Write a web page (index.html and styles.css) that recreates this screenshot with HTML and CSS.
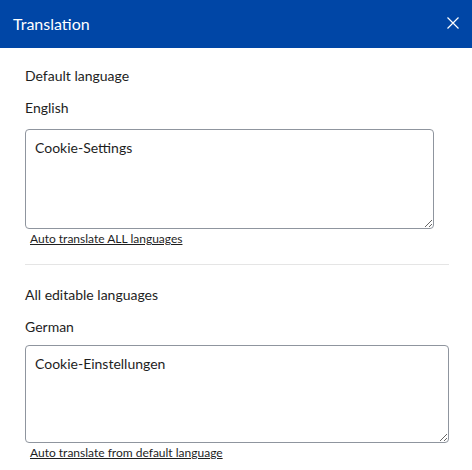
FILE: index.html
```html
<!DOCTYPE html>
<html lang="en">
<head>
  <meta charset="UTF-8">
  <meta name="viewport" content="width=device-width, initial-scale=1">
  <title>Translation</title>
  <link rel="stylesheet" href="styles.css">
</head>
<body>
  <div class="dialog">
    <div class="dialog-header">
      <span class="dialog-title">Translation</span>
      <button class="close-btn" aria-label="Close">
        <svg width="12" height="12" viewBox="0 0 12 12">
          <path d="M0.5 0.5 L11.5 11.5 M11.5 0.5 L0.5 11.5" stroke="#fff" stroke-width="1.2" fill="none"/>
        </svg>
      </button>
    </div>

    <div class="dialog-body">
      <div class="section">
        <div class="section-title">Default language</div>
        <div class="lang-name">English</div>
        <textarea class="text-field narrow">Cookie-Settings</textarea>
        <a href="#" class="action-link">Auto translate ALL languages</a>
      </div>

      <hr class="divider">

      <div class="section">
        <div class="section-title">All editable languages</div>
        <div class="lang-name">German</div>
        <textarea class="text-field second">Cookie-Einstellungen</textarea>
        <a href="#" class="action-link">Auto translate from default language</a>
      </div>
    </div>
  </div>
</body>
</html>
```

FILE: styles.css
```css
body {
  margin: 0;
  font-family: "Segoe UI", Lato, sans-serif;
  font-size: 14px;
  color: #1e1e1e;
  background: #fff;
}

.dialog-header {
  height: 48px;
  background: #0046a6;
  display: flex;
  align-items: center;
  justify-content: space-between;
  padding: 0 13px 2px;
  box-sizing: border-box;
}

.dialog-title {
  color: #fff;
  font-size: 16px;
}

.close-btn {
  background: none;
  border: none;
  padding: 0;
  width: 12px;
  height: 12px;
  display: flex;
  cursor: pointer;
}

.dialog-body {
  padding: 18px 23px 0 25px;
}

.section-title,
.lang-name {
  line-height: 20px;
}

.lang-name {
  margin-top: 12px;
}

.text-field {
  display: block;
  box-sizing: border-box;
  width: 100%;
  height: 100px;
  margin-top: 11px;
  padding: 8px 9px;
  border: 1px solid #8f959e;
  border-radius: 4px;
  font-family: inherit;
  font-size: 14px;
  line-height: 20px;
  color: #1e1e1e;
  resize: both;
}

.text-field.narrow {
  width: 409px;
}

.text-field.second {
  height: 98px;
  margin-top: 8px;
}

.action-link {
  display: block;
  padding-left: 5px;
  margin-top: 2px;
  font-size: 12px;
  line-height: 16px;
  color: #1e1e1e;
  text-decoration: underline;
}

.divider {
  border: none;
  border-top: 1px solid #e5e5e5;
  margin: 17px 0 20px;
}
```
